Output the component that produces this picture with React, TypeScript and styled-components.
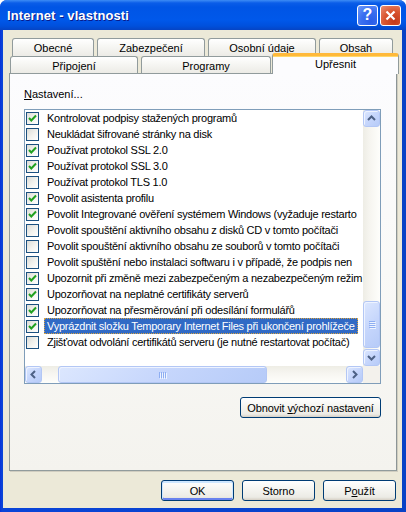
import React from 'react';
import styled, { createGlobalStyle, css } from 'styled-components';

const GlobalStyle = createGlobalStyle`
  html, body { margin: 0; padding: 0; background: #ffffff; }
  body {
    font-family: "Liberation Sans", Arial, sans-serif;
    font-size: 11px;
    color: #000;
  }
  * { box-sizing: border-box; }
`;

const Window = styled.div`
  width: 406px;
  height: 512px;
  display: flex;
  flex-direction: column;
  background: linear-gradient(to right, #0831d9 0, #0a44d8 2px, #0842c6 100%);
  border-radius: 7px 7px 0 0;
  overflow: hidden;
`;

const TitleBar = styled.div`
  height: 30px;
  flex: none;
  display: flex;
  align-items: center;
  padding: 0 5px 0 7px;
  background: linear-gradient(
    to bottom,
    #3d8cf5 0,
    #0a5de8 3px,
    #0055e5 7px,
    #0058ea 20px,
    #0050dc 26px,
    #0644c4 30px
  );
`;

const Title = styled.div`
  flex: 1;
  color: #ffffff;
  font-weight: bold;
  font-size: 13px;
  letter-spacing: 0.1px;
  text-shadow: 1px 1px 0 #0a1a8a;
`;

const CaptionButton = styled.div<{ $kind: 'help' | 'close' }>`
  width: 21px;
  height: 21px;
  margin-left: 2px;
  border: 1px solid #ffffff;
  border-radius: 3px;
  display: flex;
  align-items: center;
  justify-content: center;
  color: #ffffff;
  font-weight: bold;
  font-size: 16px;
  ${(p) =>
    p.$kind === 'help'
      ? css`
          background: radial-gradient(circle at 70% 80%, #2a5de8 0, #3a6ff0 50%, #6f9bfb 100%);
        `
      : css`
          background: radial-gradient(circle at 70% 80%, #c2391a 0, #d9552f 50%, #eb8f74 100%);
        `}
`;

const Client = styled.div`
  flex: 1;
  margin: 0 4px 4px 3px;
  background: #ece9d8;
  padding: 8px 5px 7px 6px;
  display: flex;
  flex-direction: column;
`;

const TabRow = styled.div<{ $indent: number; $height: number }>`
  display: flex;
  align-items: flex-start;
  gap: 3px;
  height: ${(p) => p.$height}px;
  padding-left: ${(p) => p.$indent}px;
`;

const Tab = styled.div<{ $w: number; $active?: boolean; $h: number }>`
  width: ${(p) => p.$w}px;
  height: ${(p) => p.$h}px;
  flex: none;
  display: flex;
  align-items: center;
  justify-content: center;
  border: 1px solid #919b9c;
  border-bottom: none;
  border-radius: 3px 3px 0 0;
  background: linear-gradient(to bottom, #ffffff 0, #f7f7f4 40%, #ecebe6 100%);
  padding-top: 1px;
  ${(p) =>
    p.$active &&
    css`
      position: relative;
      z-index: 1;
      margin-top: -3px;
      margin-left: -2px;
      background: #fcfcfe;
      border-top: 3px solid #ffb93a;
      box-shadow: inset 0 1px 0 #ffd86a;
      padding-top: 0;
      padding-bottom: 3px;
    `}
`;

const Panel = styled.div`
  height: 398px;
  flex: none;
  border: 1px solid #919b9c;
  border-right-color: #8c9596;
  box-shadow: 1px 1px 0 #d0cdc0;
  background: linear-gradient(to bottom, #fcfcfe 0, #f9f9f7 50%, #f4f3ee 100%);
  padding: 14px 15px 0 14px;
  display: flex;
  flex-direction: column;
`;

const Label = styled.div`
  height: 13px;
  line-height: 13px;
`;

const Key = styled.span`
  text-decoration: underline;
`;

const ListBox = styled.div`
  margin-top: 8px;
  height: 275px;
  border: 1px solid #7f9db9;
  background: #ffffff;
  display: grid;
  grid-template-columns: 1fr 17px;
  grid-template-rows: 1fr 17px;
`;

const Items = styled.div`
  overflow: hidden;
  white-space: nowrap;
`;

const Item = styled.div`
  height: 16px;
  display: flex;
  align-items: center;
  padding-left: 1px;
`;

const Check = styled.div`
  width: 13px;
  height: 13px;
  flex: none;
  border: 1px solid #1c5180;
  background: linear-gradient(135deg, #dcdcd7 0, #f3f3ef 55%, #ffffff 100%);
  margin-right: 5px;
  display: flex;
  align-items: center;
  justify-content: center;
`;

const ItemText = styled.span<{ $selected?: boolean }>`
  display: inline-block;
  height: 16px;
  line-height: 14px;
  padding: 0 2px;
  letter-spacing: -0.25px;
  border: 1px dotted transparent;
  ${(p) =>
    p.$selected &&
    css`
      background: #316ac5;
      color: #ffffff;
      border-color: #d9a441;
    `}
`;

const VScroll = styled.div`
  display: flex;
  flex-direction: column;
  background: linear-gradient(to right, #eeede5 0, #f6f5f0 40%, #fefefb 100%);
`;

const HScroll = styled.div`
  display: flex;
  background: linear-gradient(to bottom, #eeede5 0, #f6f5f0 40%, #fefefb 100%);
`;

const Corner = styled.div`
  background: #f3f1ec;
`;

const thumbLook = css`
  border: 1px solid #b3c7f5;
  border-radius: 3px;
  background: linear-gradient(135deg, #dce7fe 0, #c6d6fc 50%, #b6cbf8 100%);
  box-shadow: inset 1px 1px 0 #eef3ff;
`;

const ScrollBtn = styled.div`
  width: 17px;
  height: 17px;
  flex: none;
  ${thumbLook};
  display: flex;
  align-items: center;
  justify-content: center;
`;

const VTrack = styled.div`
  flex: 1;
  display: flex;
  flex-direction: column;
  justify-content: flex-end;
  padding-bottom: 1px;
`;

const HTrack = styled.div`
  flex: 1;
  display: flex;
  padding-left: 16px;
  padding-right: 79px;
`;

const Thumb = styled.div<{ $dir: 'v' | 'h' }>`
  ${thumbLook};
  display: flex;
  align-items: center;
  justify-content: center;
  ${(p) =>
    p.$dir === 'v'
      ? css`
          height: 47px;
          flex-direction: column;
          gap: 1px;
        `
      : css`
          flex: 1;
          gap: 1px;
        `}
`;

const Grip = styled.div<{ $dir: 'v' | 'h' }>`
  background: #8eaef2;
  box-shadow: 1px 1px 0 #eef4ff;
  ${(p) => (p.$dir === 'v' ? 'width: 6px; height: 1px;' : 'width: 1px; height: 6px;')}
`;

const ButtonBar = styled.div<{ $top: number; $right?: number }>`
  display: flex;
  justify-content: flex-end;
  gap: 8px;
  margin-top: ${(p) => p.$top}px;
  padding-right: ${(p) => p.$right ?? 0}px;
`;

const Button = styled.div<{ $w: number; $default?: boolean }>`
  width: ${(p) => p.$w}px;
  height: 21px;
  border: 1px solid #003c74;
  border-radius: 3px;
  background: linear-gradient(to bottom, #ffffff 0, #f6f6f2 40%, #ecebe5 85%, #d6d0c5 100%);
  display: flex;
  align-items: center;
  justify-content: center;
  letter-spacing: -0.1px;
  ${(p) =>
    p.$default &&
    css`
      box-shadow: inset 0 1px 0 1px #cee7ff, inset 0 -1px 0 1px #6982ee;
    `}
`;

// labels trimmed to what the list box shows before its right edge
const items: { label: string; checked: boolean; selected?: boolean }[] = [
  { label: 'Kontrolovat podpisy stažených programů', checked: true },
  { label: 'Neukládat šifrované stránky na disk', checked: false },
  { label: 'Používat protokol SSL 2.0', checked: true },
  { label: 'Používat protokol SSL 3.0', checked: true },
  { label: 'Používat protokol TLS 1.0', checked: false },
  { label: 'Povolit asistenta profilu', checked: true },
  { label: 'Povolit Integrované ověření systémem Windows (vyžaduje restarto', checked: true },
  { label: 'Povolit spouštění aktivního obsahu z disků CD v tomto počítači', checked: false },
  { label: 'Povolit spouštění aktivního obsahu ze souborů v tomto počítači', checked: false },
  { label: 'Povolit spuštění nebo instalaci softwaru i v případě, že podpis nen', checked: false },
  { label: 'Upozornit při změně mezi zabezpečeným a nezabezpečeným režim', checked: true },
  { label: 'Upozorňovat na neplatné certifikáty serverů', checked: true },
  { label: 'Upozorňovat na přesměrování při odesílání formulářů', checked: true },
  { label: 'Vyprázdnit složku Temporary Internet Files při ukončení prohlížeče', checked: true, selected: true },
  { label: 'Zjišťovat odvolání certifikátů serveru (je nutné restartovat počítač)', checked: false },
];

const Arrow = ({ dir }: { dir: 'up' | 'down' | 'left' | 'right' }) => {
  const pts = {
    up: '1,6 4.5,2.5 8,6',
    down: '1,3 4.5,6.5 8,3',
    left: '6,1 2.5,4.5 6,8',
    right: '3,1 6.5,4.5 3,8',
  }[dir];
  return (
    <svg width="9" height="9" viewBox="0 0 9 9">
      <polyline points={pts} fill="none" stroke="#4d6185" strokeWidth="2" />
    </svg>
  );
};

const CheckMark = () => (
  <svg width="11" height="11" viewBox="0 0 11 11">
    <polyline points="2,5 4.3,7.5 9,2.5" fill="none" stroke="#21a121" strokeWidth="2" />
  </svg>
);

export default function App() {
  return (
    <>
      <GlobalStyle />
      <Window>
        <TitleBar>
          <Title>Internet - vlastnosti</Title>
          <CaptionButton $kind="help">?</CaptionButton>
          <CaptionButton $kind="close">
            <svg width="11" height="11" viewBox="0 0 11 11">
              <path d="M1.5 1.5 L9.5 9.5 M9.5 1.5 L1.5 9.5" stroke="#fff" strokeWidth="2.2" />
            </svg>
          </CaptionButton>
        </TitleBar>
        <Client>
          <TabRow $indent={3} $height={18}>
            <Tab $w={82} $h={18}>Obecné</Tab>
            <Tab $w={108} $h={18}>Zabezpečení</Tab>
            <Tab $w={108} $h={18}>Osobní údaje</Tab>
            <Tab $w={74} $h={18}>Obsah</Tab>
          </TabRow>
          <TabRow $indent={1} $height={17}>
            <Tab $w={128} $h={17}>Připojení</Tab>
            <Tab $w={130} $h={17}>Programy</Tab>
            <Tab $w={127} $h={21} $active>Upřesnit</Tab>
          </TabRow>
          <Panel>
            <Label>
              <Key>N</Key>astavení...
            </Label>
            <ListBox>
              <Items>
                {items.map((it) => (
                  <Item key={it.label}>
                    <Check>{it.checked && <CheckMark />}</Check>
                    <ItemText $selected={it.selected}>{it.label}</ItemText>
                  </Item>
                ))}
              </Items>
              <VScroll>
                <ScrollBtn>
                  <Arrow dir="up" />
                </ScrollBtn>
                <VTrack>
                  <Thumb $dir="v">
                    <Grip $dir="v" />
                    <Grip $dir="v" />
                    <Grip $dir="v" />
                    <Grip $dir="v" />
                  </Thumb>
                </VTrack>
                <ScrollBtn>
                  <Arrow dir="down" />
                </ScrollBtn>
              </VScroll>
              <HScroll>
                <ScrollBtn>
                  <Arrow dir="left" />
                </ScrollBtn>
                <HTrack>
                  <Thumb $dir="h">
                    <Grip $dir="h" />
                    <Grip $dir="h" />
                    <Grip $dir="h" />
                    <Grip $dir="h" />
                  </Thumb>
                </HTrack>
                <ScrollBtn>
                  <Arrow dir="right" />
                </ScrollBtn>
              </HScroll>
              <Corner />
            </ListBox>
            <ButtonBar $top={13}>
              <Button $w={141}>
                Obnovit&nbsp;<Key>v</Key>ýchozí nastavení
              </Button>
            </ButtonBar>
          </Panel>
          <ButtonBar $top={9} $right={1}>
            <Button $w={73} $default>
              OK
            </Button>
            <Button $w={73}>Storno</Button>
            <Button $w={73}>
              P<Key>o</Key>užít
            </Button>
          </ButtonBar>
        </Client>
      </Window>
    </>
  );
}
